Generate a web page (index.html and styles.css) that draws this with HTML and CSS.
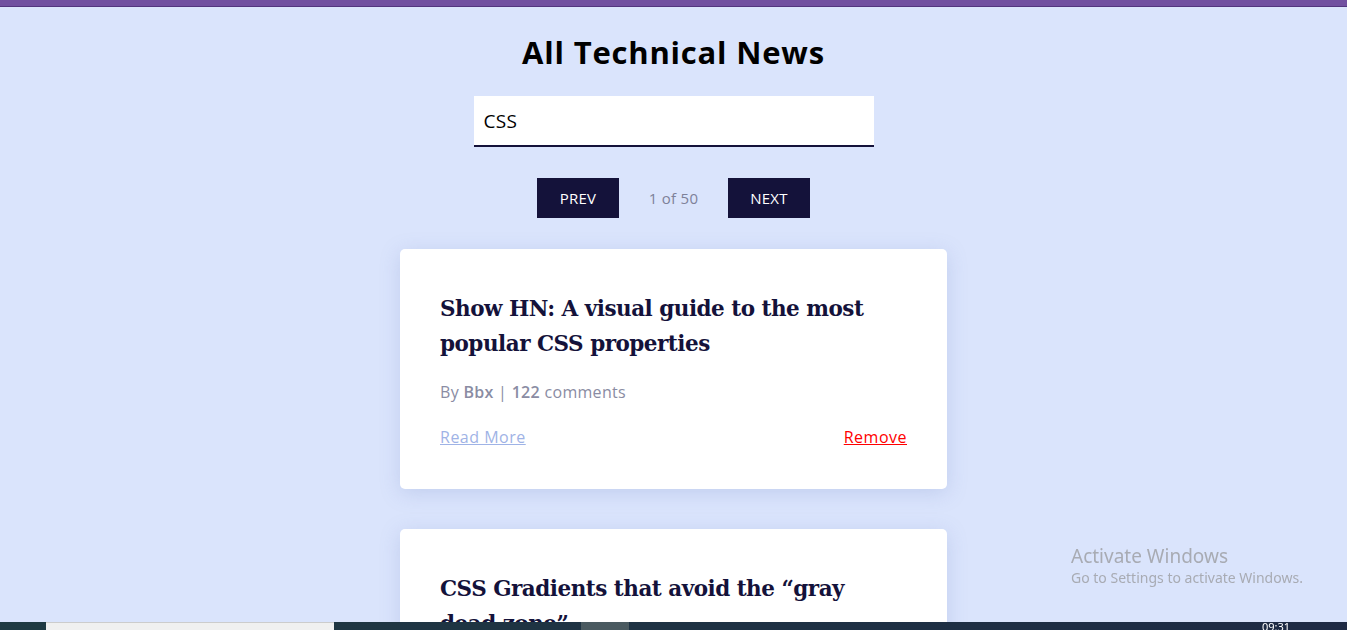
FILE: index.html
```html
<!DOCTYPE html>
<html lang="en">
<head>
<meta charset="utf-8">
<title>All Technical News</title>
<link rel="stylesheet" href="styles.css">
</head>
<body>
<div class="topbar"></div>
<main class="page">
  <h1 class="title">All Technical News</h1>
  <div class="search"><input class="search-input" type="text" value="CSS"></div>
  <div class="pager">
    <button class="btn">PREV</button>
    <span class="pager-info">1 of 50</span>
    <button class="btn">NEXT</button>
  </div>
  <section class="list">
    <article class="card">
      <h2 class="card-title">Show HN: A visual guide to the most popular CSS properties</h2>
      <p class="card-meta">By <b>Bbx</b> | <b>122</b> comments</p>
      <div class="card-actions">
        <a class="read" href="#">Read More</a>
        <a class="remove" href="#">Remove</a>
      </div>
    </article>
    <article class="card">
      <h2 class="card-title">CSS Gradients that avoid the “gray dead zone”</h2>
      <p class="card-meta">By <b>jamesfisher</b> | <b>40</b> comments</p>
      <div class="card-actions">
        <a class="read" href="#">Read More</a>
        <a class="remove" href="#">Remove</a>
      </div>
    </article>
  </section>
</main>
<div class="watermark">
  <div class="wm-title">Activate Windows</div>
  <div class="wm-sub">Go to Settings to activate Windows.</div>
</div>
<div class="taskbar">
  <div class="tb-search"></div>
  <div class="tb-active"></div>
  <div class="tb-time">09:31</div>
</div>
</body>
</html>
```
FILE: styles.css
```css
* { box-sizing: border-box; }
html, body { margin: 0; padding: 0; }
body {
  background: #dae4fc;
  font-family: "Open Sans", "Noto Sans", sans-serif;
  overflow: hidden;
  height: 630px;
}
.topbar {
  height: 7px;
  background: #7150a0;
  border-bottom: 1px solid #52357e;
}
.page {
  display: flex;
  flex-direction: column;
  align-items: center;
}
.title {
  margin: 27px 0 0;
  font-size: 31px;
  font-weight: 700;
  color: #000;
  line-height: 36px;
  letter-spacing: 0.8px;
}
.search { margin-top: 26px; }
.search-input {
  display: block;
  width: 400px;
  height: 51px;
  border: none;
  border-bottom: 2px solid #14123a;
  background: #fff;
  padding: 0 10px;
  font-family: "Open Sans", "Noto Sans", sans-serif;
  font-size: 19px;
  letter-spacing: 0.3px;
  color: #000;
  outline: none;
}
.pager {
  margin-top: 31px;
  display: flex;
  align-items: center;
}
.btn {
  width: 82px;
  height: 40px;
  background: #14123a;
  color: #fff;
  border: none;
  font-family: "Open Sans", "Noto Sans", sans-serif;
  font-size: 15px;
  letter-spacing: 0.2px;
  padding: 0;
}
.pager-info {
  width: 109px;
  text-align: center;
  color: #7e8199;
  font-size: 15px;
  letter-spacing: 0.3px;
}
.list {
  margin-top: 31px;
  display: flex;
  flex-direction: column;
  gap: 40px;
}
.card {
  width: 547px;
  min-height: 240px;
  background: #fff;
  border-radius: 5px;
  box-shadow: 0 4px 20px rgba(120, 140, 200, 0.25);
  padding: 42px 40px 40px 40px;
}
.card-title {
  margin: 0;
  padding-right: 12px;
  font-family: "DejaVu Serif", "Liberation Serif", serif;
  font-size: 21.5px;
  font-weight: 700;
  line-height: 35px;
  color: #14123a;
  letter-spacing: -0.5px;
}
.card-meta {
  margin: 19px 0 0;
  color: #8a8ca3;
  font-size: 16px;
  line-height: 24px;
  letter-spacing: 0.3px;
}
.card-meta b { font-weight: 600; }
.card-actions {
  margin-top: 21px;
  display: flex;
  justify-content: space-between;
  font-size: 16px;
  line-height: 24px;
  letter-spacing: 0.5px;
}
.read { color: #9fb3e6; }
.remove { color: #ff0000; }
.watermark {
  position: fixed;
  left: 1071px;
  top: 544px;
  font-family: "Noto Sans", "Open Sans", sans-serif;
  color: #a8abb3;
}
.wm-title { font-size: 19px; line-height: 24px; }
.wm-sub { font-size: 14px; line-height: 20px; }
.taskbar {
  position: fixed;
  left: 0; right: 0; bottom: 0;
  height: 8px;
  background: linear-gradient(90deg, #1f3a42, #1e2a44);
}
.tb-search {
  position: absolute;
  left: 46px; top: 0;
  width: 288px; height: 8px;
  background: #f0f0f0;
  border-top: 1px solid #ccc;
}
.tb-active {
  position: absolute;
  left: 581px; top: 0;
  width: 48px; height: 8px;
  background: #4a5a60;
}
.tb-time {
  position: absolute;
  left: 1262px; top: -3px;
  font-size: 11px;
  color: #fff;
  font-family: "Noto Sans", sans-serif;
}
```
